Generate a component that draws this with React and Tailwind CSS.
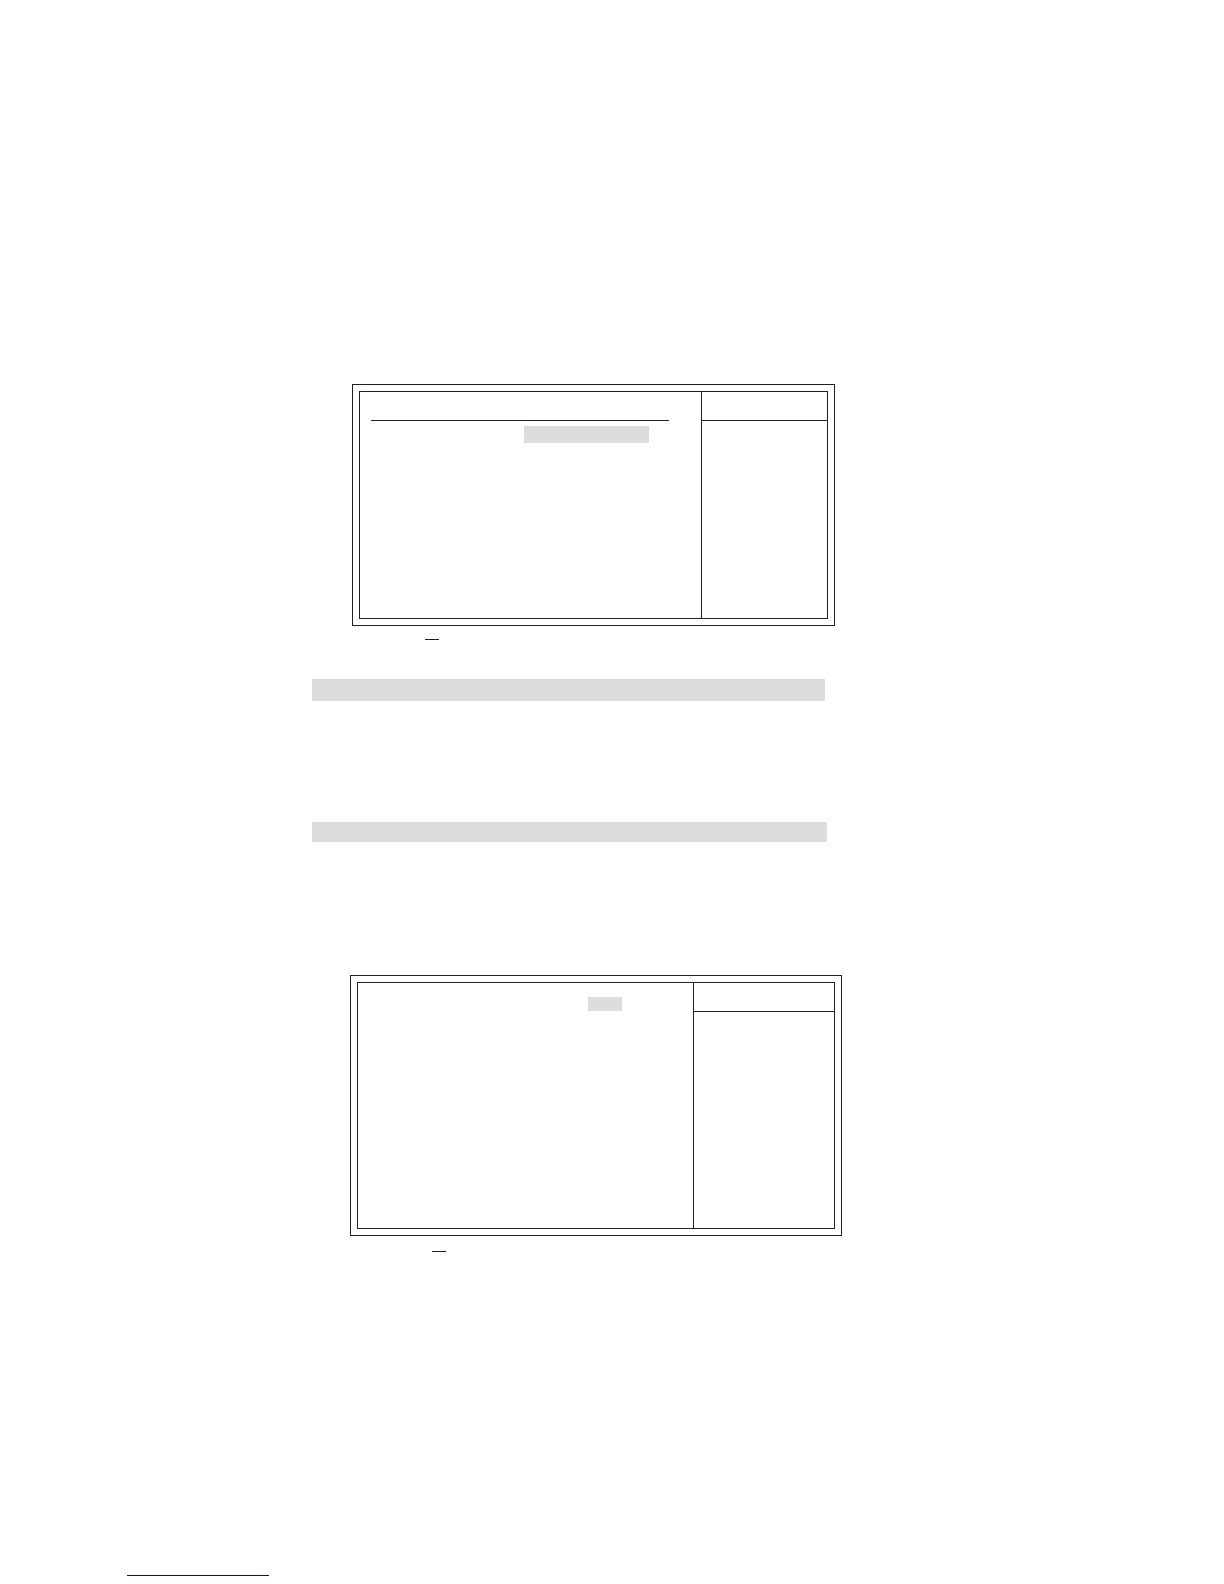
import React from 'react';

const Frame = ({ className, children, side }) => (
    <div className={`border border-[#231f20] p-[6px] ${className}`}>
        <div className="flex h-full border border-[#231f20]">
            <div className="flex-1 min-w-0">{children}</div>
            <div className={`shrink-0 border-l border-[#231f20] ${side}`}>
                <div className="h-[29px] border-b border-[#231f20]" />
            </div>
        </div>
    </div>
);

const KeyRule = ({ className }) => (
    <div className={`h-px w-[14px] bg-[#231f20] ${className}`} />
);

const App = () => {
    return (
        <div className="bg-white font-['Liberation_Sans',sans-serif]">
            <main className="ml-[312px] max-w-[530px] pt-96">
                <section>
                    <Frame className="ml-10 mr-[7px] h-[242px]" side="w-[126px]">
                        <div className="ml-[11px] mr-8 h-[29px] border-b border-[#231f20]" />
                        <div className="mt-[5px] ml-[164px] h-[17px] w-[125px] bg-[#dcdddd]" />
                    </Frame>
                    <KeyRule className="mt-[13px] ml-[113px]" />
                </section>

                <div className="mt-[39px] mr-[17px] h-[22px] bg-[#dcdddd]" />
                <div className="mt-[121px] mr-[15px] h-5 bg-[#dcdddd]" />

                <section className="mt-[133px]">
                    <Frame className="ml-[38px] h-[261px]" side="w-[141px]">
                        <div className="pt-[14px]">
                            <div className="ml-[230px] h-[14px] w-[34px] bg-[#dcdddd]" />
                        </div>
                    </Frame>
                    <KeyRule className="mt-[15px] ml-[120px]" />
                </section>
            </main>

            <footer className="mt-[323px] ml-[127px]">
                <a href="#" aria-label="Home" className="block h-px w-[142px] bg-[#0a0a96]" />
            </footer>
        </div>
    );
};

export default App;
